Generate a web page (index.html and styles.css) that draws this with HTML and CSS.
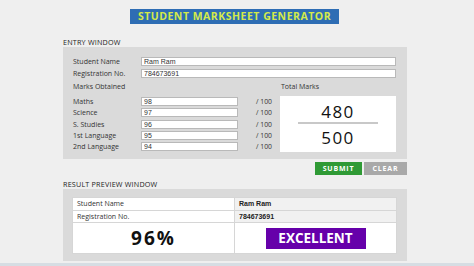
FILE: index.html
```html
<!DOCTYPE html>
<html>
	<head>
		<meta charset="UTF-8">
		<title>Student Marksheet Generator</title>
		<link rel="stylesheet" href="styles.css">
	</head>
	<body>
		<div class="page">
			<h1 class="title">STUDENT MARKSHEET GENERATOR</h1>

			<div class="section-label">ENTRY WINDOW</div>
			<div class="panel entry">
				<div class="field">
					<label>Student Name</label>
					<input type="text" class="txt wide" value="Ram Ram">
				</div>
				<div class="field">
					<label>Registration No.</label>
					<input type="text" class="txt wide" value="784673691">
				</div>
				<div class="marks">
					<div class="marks-left">
						<div class="sub">Marks Obtained</div>
						<div class="mark-list">
							<div class="mark-row"><label>Maths</label><input type="text" class="txt" value="98"><span class="out">/ 100</span></div>
							<div class="mark-row"><label>Science</label><input type="text" class="txt" value="97"><span class="out">/ 100</span></div>
							<div class="mark-row"><label>S. Studies</label><input type="text" class="txt" value="96"><span class="out">/ 100</span></div>
							<div class="mark-row"><label>1st Language</label><input type="text" class="txt" value="95"><span class="out">/ 100</span></div>
							<div class="mark-row"><label>2nd Language</label><input type="text" class="txt" value="94"><span class="out">/ 100</span></div>
						</div>
					</div>
					<div class="marks-right">
						<div class="sub">Total Marks</div>
						<div class="total-box">
							<div class="got">480</div>
							<div class="bar"></div>
							<div class="max">500</div>
						</div>
					</div>
				</div>
			</div>

			<div class="actions">
				<button class="btn submit">SUBMIT</button><button class="btn clear">CLEAR</button>
			</div>

			<div class="section-label result-label">RESULT PREVIEW WINDOW</div>
			<div class="panel result">
				<table class="sheet">
					<tr>
						<td class="key">Student Name</td>
						<td class="val">Ram Ram</td>
					</tr>
					<tr>
						<td class="key">Registration No.</td>
						<td class="val">784673691</td>
					</tr>
					<tr class="big">
						<td class="percent">96%</td>
						<td class="grade-cell"><span class="grade">EXCELLENT</span></td>
					</tr>
				</table>
			</div>
		</div>
		<div class="strip"></div>
	</body>
</html>
```

FILE: styles.css
```css
html,body{
	margin: 0;
	padding: 0;
}
body{
	width: 474px;
	height: 266px;
	overflow: hidden;
	background: #efefef;
	font-family: "Open Sans", "Liberation Sans", sans-serif;
	color: #333;
}
.page{
	width: 344px;
	height: 261px;
	margin-left: 63px;
	padding-top: 9px;
	box-sizing: border-box;
}
.title{
	width: 209px;
	height: 15px;
	margin: 0 0 0 67px;
	background: #2e6db4;
	color: #d4ea4a;
	font-size: 10.5px;
	line-height: 15px;
	font-weight: 700;
	text-align: center;
	letter-spacing: .5px;
}
.section-label{
	margin-top: 13px;
	height: 10px;
	line-height: 10px;
	font-size: 7.2px;
	letter-spacing: .2px;
	color: #222;
}
.result-label{
	margin-top: 4px;
}
.panel{
	background: #dadada;
}
.entry{
	padding: 10px 11px 8px 10px;
	height: 112px;
	box-sizing: border-box;
}
.field{
	display: flex;
	align-items: center;
	height: 9px;
	margin-bottom: 3px;
}
.field label,.mark-row label{
	width: 68px;
	font-size: 7px;
	color: #333;
}
.txt{
	box-sizing: border-box;
	height: 9px;
	margin: 0;
	padding: 0 0 0 2px;
	border: 1px solid #b9b9b9;
	background: #fff;
	font-family: "Liberation Sans", Arial, sans-serif;
	font-size: 7px;
	color: #333;
	outline: none;
}
.wide{
	width: 255px;
}
.marks{
	display: flex;
	gap: 5px;
}
.sub{
	height: 12px;
	line-height: 12px;
	font-size: 7px;
	margin-bottom: 3px;
}
.marks-right .sub{
	padding-left: 1px;
}
.mark-list{
	display: flex;
	flex-direction: column;
	gap: 2.25px;
	padding-top: 1px;
}
.mark-row{
	display: flex;
	align-items: center;
	height: 9px;
}
.mark-row .txt{
	width: 97px;
}
.out{
	width: 19px;
	margin-left: 18px;
	font-size: 6.8px;
	color: #333;
	white-space: nowrap;
}
.total-box{
	width: 116px;
	height: 56px;
	box-sizing: border-box;
	background: #fff;
	padding-top: 6px;
	display: flex;
	flex-direction: column;
	align-items: center;
	font-size: 17px;
	color: #111;
	letter-spacing: 1.5px;
}
.got{
	line-height: 19px;
}
.bar{
	width: 80px;
	height: 2px;
	background: #c8c8c8;
	margin-top: 1px;
}
.max{
	line-height: 19px;
	margin-top: 4px;
}
.actions{
	display: flex;
	justify-content: flex-end;
	gap: 2px;
	margin-top: 3px;
}
.btn{
	height: 13px;
	margin: 0;
	padding: 0;
	border: none;
	color: #fff;
	font-family: "Open Sans", "Liberation Sans", sans-serif;
	font-size: 7px;
	font-weight: 700;
	letter-spacing: .8px;
}
.submit{
	width: 47px;
	background: #2f9a35;
}
.clear{
	width: 43px;
	background: #a9a9a9;
}
.result{
	height: 72px;
	padding: 8px 10px 0 9px;
	box-sizing: border-box;
}
.sheet{
	width: 325px;
	border-collapse: collapse;
	background: #fff;
}
.sheet td{
	border: 1px solid #d6d6d6;
	padding: 0 0 0 4px;
	height: 11.5px;
	font-size: 7px;
	width: 50%;
}
.sheet .val{
	background: #f1f1f1;
	font-weight: 700;
	font-family: "Liberation Sans", Arial, sans-serif;
	color: #222;
}
.sheet .big td{
	height: 30px;
	padding: 0;
	text-align: center;
}
.sheet .percent{
	font-size: 19px;
	font-weight: 700;
	color: #111;
	letter-spacing: 2px;
}
.grade{
	display: inline-block;
	width: 100px;
	height: 21px;
	line-height: 21px;
	background: #6600aa;
	color: #fff;
	font-size: 13.5px;
	font-weight: 700;
	vertical-align: middle;
}
.strip{
	margin-top: 2px;
	height: 3px;
	background: #d6dde3;
}
```
